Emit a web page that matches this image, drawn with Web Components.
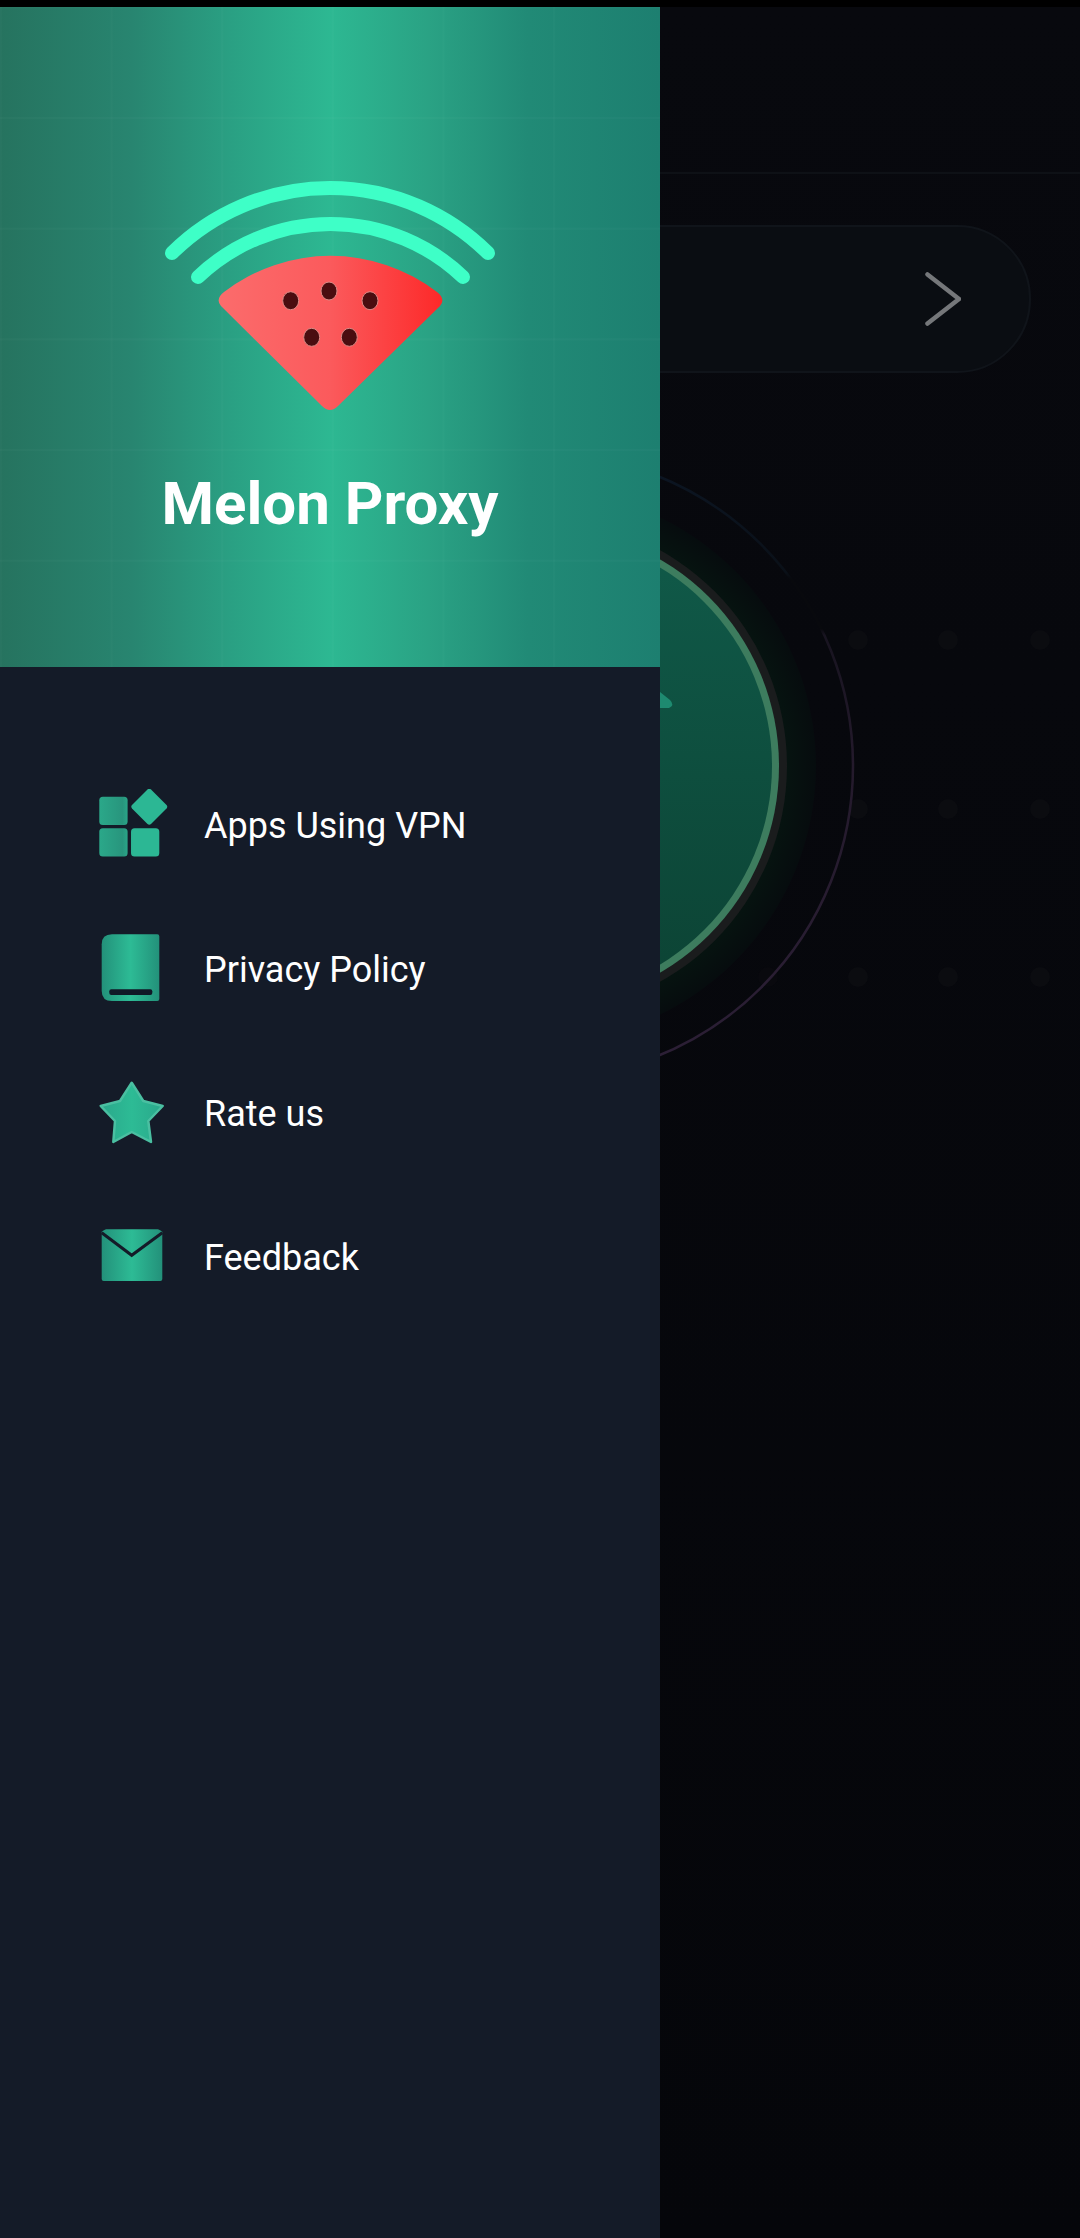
<!doctype html>
<html><head><meta charset="utf-8"><style>html,body{margin:0;padding:0;background:#000}</style></head><body>
<melon-app></melon-app>
<template id="t-app"><style>
:host{display:flex;flex-direction:column;width:1080px;height:2238px;background:#000;font-family:Roboto,"Liberation Sans",sans-serif;overflow:hidden}
.bar{height:7px;flex:none;background:#000}
main{flex:1;position:relative;min-height:0}
melon-backdrop{position:absolute;inset:0}
melon-drawer{position:absolute;left:0;top:0;bottom:0;width:660px}
</style><div class="bar"></div><main><melon-backdrop></melon-backdrop><melon-drawer>
<melon-item label="Apps Using VPN" icon="apps"></melon-item>
<melon-item label="Privacy Policy" icon="book"></melon-item>
<melon-item label="Rate us" icon="star"></melon-item>
<melon-item label="Feedback" icon="mail"></melon-item>
</melon-drawer></main></template>

<template id="t-backdrop"><style>
:host{display:block;background:linear-gradient(180deg,#08090e 0,#07080d 30%,#05060a 100%);overflow:hidden}
.top{height:165px;border-bottom:2px solid #0e1116}
.pill{box-sizing:border-box;height:148px;margin:51px 49px 0 -60px;border:2px solid #10141a;border-radius:74px;background:#0a0d12;display:flex;align-items:center;justify-content:flex-end;padding-right:68px}
.pill svg{display:block}
.radar{display:block}
</style><div class="top"></div><div class="pill"><svg width="36" height="54" viewBox="0 0 36 54" fill="none"><path d="M2.500 2.500 34 27 2.500 51.500" stroke="#75777a" stroke-width="4.500" stroke-linecap="round" stroke-linejoin="round"/></svg></div>
<svg class="radar" width="1080" height="800" viewBox="0 373 1080 800" fill="none">
<defs><linearGradient id="disc" x1="0" y1="0" x2="0" y2="1"><stop offset="0" stop-color="#105a49"/><stop offset="1" stop-color="#0c4334"/></linearGradient>
<radialGradient id="glow"><stop offset=".895" stop-color="#061310"/><stop offset="1" stop-color="#060c0e"/></radialGradient>
<linearGradient id="outer" gradientUnits="userSpaceOnUse" x1="0" y1="454" x2="0" y2="1078"><stop offset="0" stop-color="#0c1624"/><stop offset=".19" stop-color="#0a1018"/><stop offset=".2" stop-color="#08090d"/><stop offset=".28" stop-color="#08090d"/><stop offset=".29" stop-color="#181420"/><stop offset=".5" stop-color="#241a2c"/><stop offset="1" stop-color="#2c1f36"/></linearGradient></defs>
<g fill="#0b0c10"><circle cx="858" cy="640" r="10"/><circle cx="948" cy="640" r="10"/><circle cx="1040" cy="640" r="10"/><circle cx="858" cy="809" r="10"/><circle cx="948" cy="809" r="10"/><circle cx="1040" cy="809" r="10"/><circle cx="768" cy="977" r="10" fill="#09090e"/><circle cx="858" cy="977" r="10"/><circle cx="948" cy="977" r="10"/><circle cx="1040" cy="977" r="10"/></g>
<circle cx="540" cy="766" r="313" stroke="url(#outer)" stroke-width="2.500"/>
<circle cx="540" cy="766" r="276" fill="url(#glow)"/>
<circle cx="540" cy="766" r="247" fill="#1a1c1d"/>
<circle cx="540" cy="766" r="239" fill="#3d7c5e"/>
<circle cx="540" cy="766" r="232" fill="url(#disc)"/>
<path d="M660 692 670 700Q675 705 669 708L660 708Z" fill="#1e8a70"/>
</svg></template>

<template id="t-drawer"><style>
:host{display:flex;flex-direction:column;background:#141b28}
header{height:660px;flex:none;position:relative;box-sizing:border-box;display:flex;flex-direction:column;align-items:center;
background:
linear-gradient(rgba(255,255,255,.02) 0 2px,transparent 2px) 0 110px/100% 110.700px,
linear-gradient(90deg,rgba(255,255,255,.015) 0 2px,transparent 2px) 110.600px 0/110.600px 100%,
linear-gradient(90deg,#26735f 0,#288570 20%,#2aa083 35%,#2db892 50%,#2aa284 65%,#218a76 80%,#1d7f70 100%)}
svg{display:block;margin-top:160px;flex:none}
h1{margin:0;margin-top:57px;font:700 60px/72px Roboto,"Liberation Sans",sans-serif;color:#fff}
nav{padding-top:86px;display:flex;flex-direction:column}
</style><header>
<svg width="336" height="244" viewBox="0 0 336 244" fill="none">
<defs><linearGradient id="m" x1="0" x2="1" y1="0" y2="0"><stop offset="0" stop-color="#fb6c6c"/><stop offset=".5" stop-color="#fb5a5c"/><stop offset="1" stop-color="#fd2929"/></linearGradient></defs>
<g transform="translate(-162,-167)">
<path d="M172 253A224.500 224.500 0 0 1 488 253" stroke="#3effc7" stroke-width="14" stroke-linecap="round" fill="none"/>
<path d="M198 277A192 192 0 0 1 463 277" stroke="#3effc7" stroke-width="14" stroke-linecap="round" fill="none"/>
<path d="M224 292A175 175 0 0 1 437 292Q446 299 440 306L338 406Q330 414 322 406L221 306Q215 299 224 292Z" fill="url(#m)"/>
<g fill="#4a0d10" stroke="#d98a85" stroke-width="1">
<ellipse cx="290.700" cy="300.700" rx="8" ry="9"/><ellipse cx="329" cy="291" rx="8" ry="9"/><ellipse cx="370" cy="300.700" rx="8" ry="9"/><ellipse cx="311.700" cy="337.300" rx="8" ry="9"/><ellipse cx="349.300" cy="337.300" rx="8" ry="9"/></g>
</g></svg>
<h1>Melon Proxy</h1></header><nav><slot></slot></nav></template>

<template id="t-item"><style>
:host{display:flex;align-items:center;height:144px;padding-left:98px;gap:34px;color:#fff;font:400 36px/44px Roboto,"Liberation Sans",sans-serif}
svg{display:block;flex:none}
#l{padding-top:2px}
</style><span id="i"></span><span id="l"></span></template>

<script>
const tpl=(id)=>document.getElementById(id).content.cloneNode(true);
class Base extends HTMLElement{constructor(id){super();this.attachShadow({mode:'open'}).appendChild(tpl(id));}}
const grad=(id,e='#23917a',c='#2dbb95')=>`<defs><linearGradient id="${id}" x1="0" x2="1" y1="0" y2="0"><stop offset="0" stop-color="${e}"/><stop offset=".5" stop-color="${c}"/><stop offset="1" stop-color="${e}"/></linearGradient></defs>`;
const icons={
apps:`<defs><linearGradient id="a" gradientUnits="userSpaceOnUse" x1="0" x2="70" y1="0" y2="0"><stop offset="0" stop-color="#2ba98a"/><stop offset=".35" stop-color="#28957d"/><stop offset=".5" stop-color="#2cb794"/><stop offset="1" stop-color="#2cb794"/></linearGradient></defs><g fill="url(#a)"><rect x="1.300" y="7.700" width="28.300" height="28.300" rx="3.500"/><rect x="1.300" y="39.300" width="28.300" height="28.300" rx="3.500"/><rect x="33" y="39.300" width="28.300" height="28.300" rx="3.500"/><path d="M49.500 .5Q51.300-1 53 .5L68.500 16Q70 17.700 68.500 19.400L53 35Q51.300 36.500 49.500 35L34 19.400Q32.500 17.700 34 16Z"/></g>`,
book:`${grad('b')}<path d="M14 1.300H59.300Q61.300 1.300 61.300 3.300V66Q61.300 68 59.300 68H14Q3.700 68 3.700 58V11.300Q3.700 1.300 14 1.300Z" fill="url(#b)"/><rect x="11.300" y="56.300" width="43" height="5.700" rx="2" fill="#101827"/>`,
star:`${grad('s','#2aa88b','#2dbb95')}<path d="M33.700 5.700 45.300 24 64.700 29 50.300 44 53 65 33.700 55 15.300 65 17 44 2.700 29 22 24Z" fill="url(#s)" stroke="#4abfa1" stroke-width="2.500" stroke-linejoin="round"/>`,
mail:`${grad('m')}<rect x="3.700" y="8.300" width="60.600" height="51.700" rx="2" fill="url(#m)"/><path d="M3.700 11.700 33.700 34.300 64.300 11.700" fill="none" stroke="#141b28" stroke-width="3" stroke-linejoin="miter"/><path d="M3 8H8L3 11ZM65 8H60L65 11Z" fill="#141b28"/>`};
customElements.define('melon-backdrop',class extends Base{constructor(){super('t-backdrop')}});
customElements.define('melon-drawer',class extends Base{constructor(){super('t-drawer')}});
customElements.define('melon-item',class extends Base{constructor(){super('t-item')}
connectedCallback(){this.shadowRoot.getElementById('l').textContent=this.getAttribute('label');
this.shadowRoot.getElementById('i').innerHTML=`<svg width="72" height="72" viewBox="0 0 72 72">${icons[this.getAttribute('icon')]}</svg>`;}});
customElements.define('melon-app',class extends Base{constructor(){super('t-app')}});
</script></body></html>
